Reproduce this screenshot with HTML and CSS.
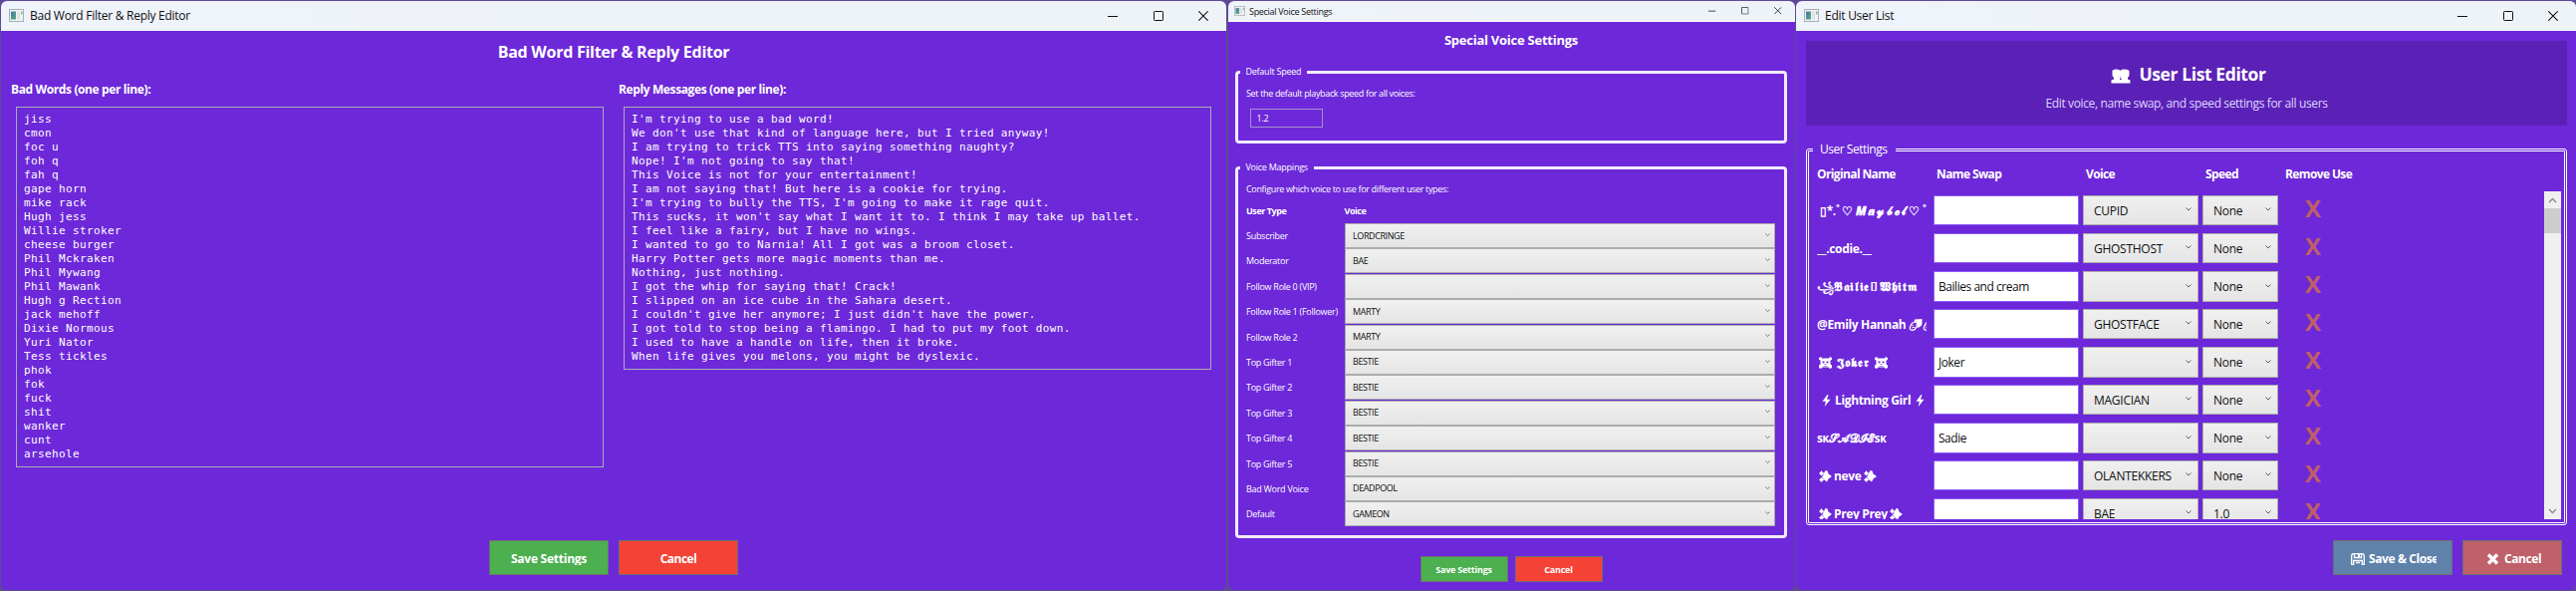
FILE: index.html
```html
<!DOCTYPE html>
<html lang="en">
<head>
<meta charset="utf-8">
<title>TTS Settings Windows</title>
<link rel="stylesheet" href="styles.css">
</head>
<body>
<svg class="defs" width="0" height="0">
  <defs>
    <linearGradient id="appfill" x1="0" y1="0" x2="1" y2="1"><stop offset="0" stop-color="#4c78b0"/><stop offset="1" stop-color="#4fae7c"/></linearGradient>
    <symbol id="app" viewBox="0 0 15 13"><rect x=".5" y=".5" width="14" height="12" fill="#f2f3f3" stroke="#a9aeb2"/><rect x="2" y="2.5" width="5" height="8" fill="url(#appfill)"/><rect x="8" y="2.5" width="3" height="8" fill="#dfe2e4"/><rect x="12" y="2.5" width="1.5" height="3" fill="#7fb89b"/></symbol>
    <symbol id="min" viewBox="0 0 10 10"><path d="M0 5.5H10" stroke="#111"/></symbol>
    <symbol id="max" viewBox="0 0 10 10"><rect x=".5" y=".5" width="9" height="9" rx=".8" fill="none" stroke="#111"/></symbol>
    <symbol id="close" viewBox="0 0 10 10"><path d="M.3 .3L9.7 9.7M9.7 .3L.3 9.7" stroke="#111" stroke-width="1.05"/></symbol>
    <symbol id="down" viewBox="0 0 6 4"><path d="M.5 .5L3 3L5.5 .5" fill="none" stroke="#606060"/></symbol>
    <symbol id="people" viewBox="0 0 20 15"><path fill="#fff" d="M1.500 2Q2 .5 5 .5Q8 .5 9.500 1.700Q11 .5 14 .5Q18 .5 18.500 2.500V6Q18.500 8 17 9V10.500L19.500 11.500V14.500H.5V11.500L3 10.500V9Q1.500 8 1.500 6Z"/><path d="M10 7V9.500L11 11L9 11Z" fill="#5b21b6"/></symbol>
    <symbol id="floppy" viewBox="0 0 14 12"><path fill="none" stroke="#fff" stroke-width="1.300" d="M.7 11.300V2L2 .7H12L13.300 2V11.300H11.300V7.500H2.700V11.300Z"/><path d="M3.500 .7V4.500H10.500V.7M5 9.500H9" fill="none" stroke="#fff" stroke-width="1.300"/><path d="M7 1H9V4H7Z" fill="#fff"/></symbol>
    <symbol id="cross" viewBox="0 0 13 12"><path d="M2 1.500L11 10.500M11 1.500L2 10.500" stroke="#fff" stroke-width="3.400"/></symbol>
    <symbol id="spark" viewBox="0 0 13 12"><path fill="#fff" d="M6.500 0L8.500 .5L9.500 3.500L13 6L9.500 8.500L8 11.500L5.500 9.500L3 7L4.500 4Z"/><path fill="#fff" d="M2.500 0L3.600 1.800L5.500 3L3.600 4.300L2.500 5.500L1.400 4.300L0 3L1.400 1.800ZM2.500 7L3.600 8.300L5.500 9.500L3.600 10.600L2.500 12L1.400 10.600L0 9.500L1.400 8.300Z"/></symbol>
    <symbol id="bolt" viewBox="0 0 9 12"><path fill="#fff" d="M5.500 0L.5 6.800H3.800L2.800 12L8.500 4.800H5L6.500 0Z"/></symbol>
    <symbol id="skull" viewBox="0 0 13 12"><path fill="#fff" d="M0 1L2 0L3 1.500H10L11 0L13 1V3L11.500 3.500V7.500L13 8.500V11L11 12L9.500 10.500H3.500L2 12L0 11V8.500L1.500 7.500V3.500L0 3Z"/><path d="M3.500 4.500H5.500V6.300H3.500ZM7.500 4.500H9.500V6.300H7.500ZM5.700 7.300H7.300V8H5.700ZM4.500 9H8.500V9.600H4.500Z" fill="#6d28d9"/></symbol>
    <symbol id="masks" viewBox="0 0 14 12"><path fill="none" stroke="#fff" stroke-width="1.200" d="M3.500 4L8.500 3L8 8Q6.500 11.500 3.500 11.300Q.8 11 1.300 8.500Z"/><path fill="#fff" d="M6 .5L13.500 0V5Q12 9 8.500 8.800L9 2.500L5.500 3Z"/><path d="M3.500 6.500L5 6.200M3 9Q5 8 6.500 8.500" stroke="#fff"/></symbol>
  </defs>
</svg>

<div class="desktop">
  <section class="window filter">
    <header class="titlebar"><svg class="app"><use href="#app"/></svg><span class="caption">Bad Word Filter &amp; Reply Editor</span><svg class="ctl"><use href="#min"/></svg><svg class="ctl"><use href="#max"/></svg><svg class="ctl"><use href="#close"/></svg></header>
    <h1>Bad Word Filter &amp; Reply Editor</h1>
    <div class="columns">
      <div class="col words">
        <h2>Bad Words (one per line):</h2>
        <pre class="box">jiss
cmon
foc u
foh q
fah q
gape horn
mike rack
Hugh jess
Willie stroker
cheese burger
Phil Mckraken
Phil Mywang
Phil Mawank
Hugh g Rection
jack mehoff
Dixie Normous
Yuri Nator
Tess tickles
phok
fok
fuck
shit
wanker
cunt
arsehole</pre>
      </div>
      <div class="col replies">
        <h2>Reply Messages (one per line):</h2>
        <pre class="box">I'm trying to use a bad word!
We don't use that kind of language here, but I tried anyway!
I am trying to trick TTS into saying something naughty?
Nope! I'm not going to say that!
This Voice is not for your entertainment!
I am not saying that! But here is a cookie for trying.
I'm trying to bully the TTS, I'm going to make it rage quit.
This sucks, it won't say what I want it to. I think I may take up ballet.
I feel like a fairy, but I have no wings.
I wanted to go to Narnia! All I got was a broom closet.
Harry Potter gets more magic moments than me.
Nothing, just nothing.
I got the whip for saying that! Crack!
I slipped on an ice cube in the Sahara desert.
I couldn't give her anymore; I just didn't have the power.
I got told to stop being a flamingo. I had to put my foot down.
I used to have a handle on life, then it broke.
When life gives you melons, you might be dyslexic.</pre>
      </div>
    </div>
    <footer class="actions"><div class="btn green"><span>Save Settings</span></div><div class="btn red"><span>Cancel</span></div></footer>
  </section>

  <section class="window voices">
    <header class="titlebar"><svg class="app"><use href="#app"/></svg><span class="caption">Special Voice Settings</span><svg class="ctl"><use href="#min"/></svg><svg class="ctl"><use href="#max"/></svg><svg class="ctl"><use href="#close"/></svg></header>
    <h1>Special Voice Settings</h1>
    <fieldset class="speed">
      <legend>Default Speed</legend>
      <p>Set the default playback speed for all voices:</p>
      <div class="field">1.2</div>
    </fieldset>
    <fieldset class="mappings">
      <legend>Voice Mappings</legend>
      <p>Configure which voice to use for different user types:</p>
      <div class="maphead"><b>User Type</b><b>Voice</b></div>
      <div class="maprows">
        <div class="map"><label>Subscriber</label><div class="combo">LORDCRINGE<svg><use href="#down"/></svg></div></div>
        <div class="map"><label>Moderator</label><div class="combo">BAE<svg><use href="#down"/></svg></div></div>
        <div class="map"><label>Follow Role 0 (VIP)</label><div class="combo"><svg><use href="#down"/></svg></div></div>
        <div class="map"><label>Follow Role 1 (Follower)</label><div class="combo">MARTY<svg><use href="#down"/></svg></div></div>
        <div class="map"><label>Follow Role 2</label><div class="combo">MARTY<svg><use href="#down"/></svg></div></div>
        <div class="map"><label>Top Gifter 1</label><div class="combo">BESTIE<svg><use href="#down"/></svg></div></div>
        <div class="map"><label>Top Gifter 2</label><div class="combo">BESTIE<svg><use href="#down"/></svg></div></div>
        <div class="map"><label>Top Gifter 3</label><div class="combo">BESTIE<svg><use href="#down"/></svg></div></div>
        <div class="map"><label>Top Gifter 4</label><div class="combo">BESTIE<svg><use href="#down"/></svg></div></div>
        <div class="map"><label>Top Gifter 5</label><div class="combo">BESTIE<svg><use href="#down"/></svg></div></div>
        <div class="map"><label>Bad Word Voice</label><div class="combo">DEADPOOL<svg><use href="#down"/></svg></div></div>
        <div class="map"><label>Default</label><div class="combo">GAMEON<svg><use href="#down"/></svg></div></div>
      </div>
    </fieldset>
    <footer class="actions"><div class="btn green"><span>Save Settings</span></div><div class="btn red"><span>Cancel</span></div></footer>
  </section>

  <section class="window users">
    <header class="titlebar"><svg class="app"><use href="#app"/></svg><span class="caption">Edit User List</span><svg class="ctl"><use href="#min"/></svg><svg class="ctl"><use href="#max"/></svg><svg class="ctl"><use href="#close"/></svg></header>
    <div class="banner">
      <h1><svg><use href="#people"/></svg>User List Editor</h1>
      <p>Edit voice, name swap, and speed settings for all users</p>
    </div>
    <fieldset class="settings">
      <legend>User Settings</legend>
      <div class="grid head"><b>Original Name</b><b>Name Swap</b><b>Voice</b><b>Speed</b><b>Remove Use</b></div>
      <div class="scroll">
        <div class="rows">
          <div class="grid row"><div class="name maybel">▯*.˚ ♡ <i>𝑴𝒂𝔂𝓫𝓮𝓵</i>♡ ˚.</div><div class="input"></div><div class="combo">CUPID<svg><use href="#down"/></svg></div><div class="combo">None<svg><use href="#down"/></svg></div><div class="remove">X</div></div>
          <div class="grid row"><div class="name">__.codie.__</div><div class="input"></div><div class="combo">GHOSTHOST<svg><use href="#down"/></svg></div><div class="combo">None<svg><use href="#down"/></svg></div><div class="remove">X</div></div>
          <div class="grid row"><div class="name bailie"><em>꧁</em>𝕭𝖆𝖎𝖑𝖎𝖊▯𝖂𝖍𝖎𝖙𝖒</div><div class="input">Bailies and cream</div><div class="combo"><svg><use href="#down"/></svg></div><div class="combo">None<svg><use href="#down"/></svg></div><div class="remove">X</div></div>
          <div class="grid row"><div class="name">@Emily Hannah <svg class="g14"><use href="#masks"/></svg> <svg class="g14"><use href="#masks"/></svg></div><div class="input"></div><div class="combo">GHOSTFACE<svg><use href="#down"/></svg></div><div class="combo">None<svg><use href="#down"/></svg></div><div class="remove">X</div></div>
          <div class="grid row"><div class="name joker"><svg class="g13"><use href="#skull"/></svg><i>𝕵𝖔𝖐𝖊𝖗</i><svg class="g13"><use href="#skull"/></svg></div><div class="input">Joker</div><div class="combo"><svg><use href="#down"/></svg></div><div class="combo">None<svg><use href="#down"/></svg></div><div class="remove">X</div></div>
          <div class="grid row"><div class="name bolts"><svg class="g9"><use href="#bolt"/></svg><i>Lightning Girl</i><svg class="g9"><use href="#bolt"/></svg></div><div class="input"></div><div class="combo">MAGICIAN<svg><use href="#down"/></svg></div><div class="combo">None<svg><use href="#down"/></svg></div><div class="remove">X</div></div>
          <div class="grid row"><div class="name sadie">sᴋ<i>𝓢𝓐𝓓𝓘𝓔</i>sᴋ</div><div class="input">Sadie</div><div class="combo"><svg><use href="#down"/></svg></div><div class="combo">None<svg><use href="#down"/></svg></div><div class="remove">X</div></div>
          <div class="grid row"><div class="name sparks"><svg class="g13"><use href="#spark"/></svg><i>neve</i><svg class="g13"><use href="#spark"/></svg></div><div class="input"></div><div class="combo">OLANTEKKERS<svg><use href="#down"/></svg></div><div class="combo">None<svg><use href="#down"/></svg></div><div class="remove">X</div></div>
          <div class="grid row"><div class="name sparks"><svg class="g13"><use href="#spark"/></svg><i>Prey Prey</i><svg class="g13"><use href="#spark"/></svg></div><div class="input"></div><div class="combo">BAE<svg><use href="#down"/></svg></div><div class="combo">1.0<svg><use href="#down"/></svg></div><div class="remove">X</div></div>
        </div>
        <div class="bar">
          <svg viewBox="0 0 17 17"><path d="M5 11L8.500 7.500L12 11" fill="none" stroke="#8a8a8a" stroke-width="1.400"/></svg>
          <div class="thumb"></div>
          <svg class="end" viewBox="0 0 17 17"><path d="M5 7L8.500 10.500L12 7" fill="none" stroke="#8a8a8a" stroke-width="1.400"/></svg>
        </div>
      </div>
    </fieldset>
    <footer class="actions"><div class="btn blue"><svg class="floppy"><use href="#floppy"/></svg><span>Save &amp; Close</span></div><div class="btn rose"><svg class="cross"><use href="#cross"/></svg><span>Cancel</span></div></footer>
  </section>
</div>
</body>
</html>
```
FILE: styles.css
```css
* { box-sizing: border-box; }
body {
  margin: 0;
  background: #5d4a92;
  color: #fff;
  font: 12px/18px "Open Sans", "Noto Sans", sans-serif;
  overflow: hidden;
}
h1, h2, p { margin: 0; white-space: nowrap; }
i, em { font-style: normal; }
.defs { position: absolute; }
svg { display: block; flex: none; }

.desktop {
  display: grid;
  grid-template-columns: 1230px 569px 783px;
  column-gap: 1.5px;
  height: 593px;
  padding: 1px 0 1px 1px;
}
.window {
  display: flex;
  flex-direction: column;
  min-width: 0;
  background: #6d28d9;
  border-radius: 6px;
  overflow: hidden;
}
.titlebar {
  display: flex;
  align-items: center;
  flex: none;
  height: 30px;
  padding: 0 18px 0 8px;
  background: linear-gradient(90deg, #eff3fb, #eef3f8 50%);
  color: #111;
}
.app { width: 15px; height: 13px; margin-top: -2px; }
.caption {
  flex: 1;
  margin-left: 6px;
  letter-spacing: -.26px;
  white-space: nowrap;
}
.ctl { width: 10px; height: 10px; margin: -1px 0 0 35.5px; }

.actions { display: flex; flex: none; margin-top: auto; }
.btn {
  display: flex;
  border: 1px solid #707070;
  font-weight: 700;
}
.btn span { display: block; overflow: hidden; white-space: nowrap; }
.green { background: #4caf50; }
.red { background: #f44336; }
.blue { background: #5f82ab; }
.rose { background: #bf606a; }

.combo {
  display: flex;
  align-items: center;
  border: 1px solid #acacac;
  background: linear-gradient(#f0f0f0, #e5e5e5);
  color: #111;
}
.combo svg { width: 6px; height: 4px; margin: -2px 6px 0 auto; }

/* Bad word filter */
.filter h1 {
  margin-top: 9px;
  font-size: 16px;
  line-height: 24px;
  letter-spacing: -.26px;
  text-align: center;
}
.columns {
  display: grid;
  grid-template-columns: 611px 610px;
  margin: 17px 0 0 9px;
}
.filter h2 { font-size: 12px; line-height: 18px; letter-spacing: -.38px; padding-left: 1px; }
.box {
  margin: 8px 0 0;
  padding: 5px 7px;
  border: 1px solid #abadb3;
  font: 11px/14px "DejaVu Sans Mono", monospace;
  letter-spacing: .375px;
  white-space: pre;
}
.words .box { width: 590px; margin-left: 6px; }
.replies .box { width: 590px; margin-left: 5px; }
.replies h2 { padding-left: 0; }
.filter .actions { justify-content: center; gap: 10px; padding-bottom: 15px; }
.filter .btn { width: 120px; height: 35px; justify-content: center; padding-top: 9px; letter-spacing: -.25px; }
.filter .btn span { height: 15px; }
.filter .btn.red { letter-spacing: -.5px; }

/* Special voice settings */
.voices { font-size: 9px; line-height: 14px; letter-spacing: -.2px; }
.voices .titlebar { height: 21px; padding: 0 13px 0 6px; border-bottom: 1px solid #f8f8ff; }
.voices .app { width: 11px; height: 10px; margin-top: -1px; }
.voices .caption { margin-left: 4.500px; letter-spacing: -.3px; margin-top: 1px; }
.voices .ctl { width: 7.500px; height: 7.500px; margin: 0 0 0 25.500px; }
.voices h1 {
  margin-top: 8px;
  font-size: 13px;
  line-height: 20px;
  letter-spacing: -.25px;
  text-align: center;
}
fieldset { min-width: 0; margin: 0; padding: 0; }
.voices fieldset {
  margin: 0 7.500px 0 7px;
  padding: 8px 7.500px 0 8.500px;
  border: 3px solid #f1ebfc;
  border-radius: 4px;
}
.voices legend { margin-left: -6px; padding: 0 6px 0 5.500px; letter-spacing: -.25px; }
.voices fieldset p { letter-spacing: -.34px; }
.voices fieldset.speed { height: 79px; margin-top: 15px; }
.voices fieldset.mappings { height: 379px; margin-top: 17px; }
.field {
  width: 73px;
  height: 19px;
  margin: 8px 0 0 3.500px;
  padding: 2px 6px;
  border: 1px solid #a58fd0;
}
.maphead, .map { display: grid; grid-template-columns: 98.500px 432.500px; }
.maphead { margin-top: 8px; letter-spacing: -.45px; }
.maprows { display: grid; row-gap: 3.400px; margin-top: 5px; }
.map { height: 22px; }
.map label { line-height: 25px; letter-spacing: -.28px; white-space: nowrap; }
.map .combo { padding-left: 7.500px; letter-spacing: -.4px; }
.map .combo svg { width: 5px; height: 3.500px; margin-right: 4px; }
.voices .actions { justify-content: center; gap: 7px; padding-bottom: 8px; }
.voices .btn { width: 88px; height: 26px; justify-content: center; padding-top: 6px; letter-spacing: -.22px; }
.voices .btn span { height: 12px; }

/* User list */
.banner {
  flex: none;
  height: 85px;
  margin: 10px 9px 0 10px;
  padding-top: 20px;
  background: #5b21b6;
}
.banner h1 {
  display: flex;
  justify-content: center;
  align-items: center;
  gap: 8px;
  padding-left: 4px;
  font-size: 17.500px;
  line-height: 26px;
  letter-spacing: -.4px;
}
.banner svg { width: 20px; height: 15px; margin-top: 5px; }
.banner p { margin-top: 8px; color: #ddd6fe; letter-spacing: -.37px; text-align: center; }
.settings {
  height: 385.500px;
  margin: 15.500px 9px 0 10px;
  border: 3px double #fff;
  border-radius: 3px;
}
.settings legend {
  margin-left: 4px;
  padding: 0 8.500px 2px 7px;
  line-height: 16px;
  letter-spacing: -.48px;
}
.grid {
  display: grid;
  grid-template-columns: 110px 146px 116px 76px 80px;
  column-gap: 4px;
  padding-left: 8px;
}
.head {
  grid-template-columns: 116px 146px 116px 76px 80px;
  padding-top: 6px;
  letter-spacing: -.62px;
  white-space: nowrap;
}
.scroll { display: flex; height: 329px; margin-top: 8px; overflow: hidden; }
.rows { display: grid; grid-auto-rows: 30px; row-gap: 8px; flex: 1; padding-top: 4px; }
.row { grid-template-columns: 113px 146px 116px 76px 50px; }
.row .input {
  padding: 1px 4px 0;
  border: 1px solid #8b5cf6;
  background: #fff;
  color: #111;
  line-height: 28px;
  letter-spacing: -.46px;
  white-space: nowrap;
}
.row .combo { padding: 2px 0 0 10px; letter-spacing: -.27px; }
.row .combo svg { margin-top: -3px; }
.name {
  display: flex;
  align-items: center;
  width: 110px;
  overflow: hidden;
  padding-top: 2px;
  font-weight: 700;
  letter-spacing: -.35px;
  white-space: pre;
}
.g9 { width: 9px; height: 12px; }
.g13 { width: 13px; height: 12px; }
.g14 { width: 14px; height: 12px; }
.maybel { padding-left: 3px; }
.maybel i { letter-spacing: 2.300px; }
.bailie { letter-spacing: .7px; }
.bailie em { font-size: 11px; letter-spacing: 0; }
.joker { padding-left: 2px; gap: 5px; }
.joker i { letter-spacing: .8px; }
.bolts { padding-left: 5px; gap: 4px; }
.bolts svg:last-child { margin-left: 1px; }
.sadie i { letter-spacing: .1px; }
.sparks { padding-left: 2px; gap: 2px; }
.remove {
  padding-left: 23px;
  color: #bf5f68;
  font-size: 24px;
  font-weight: 700;
  line-height: 25px;
}
.bar { display: flex; flex-direction: column; width: 17px; margin-right: 3px; background: #f0f0f0; }
.bar svg { width: 17px; height: 17px; }
.bar .end { margin-top: auto; }
.thumb { height: 25px; background: #cdcdcd; }
.users .actions { justify-content: flex-end; gap: 10px; padding: 0 14px 15px 0; }
.users .btn { height: 35px; padding-top: 9px; letter-spacing: -.4px; }
.blue { width: 120px; padding-left: 17px; }
.blue span { width: 68px; margin-left: 4px; }
.rose { width: 100px; padding-left: 23px; }
.rose span { margin-left: 5px; }
.floppy { width: 14px; height: 12px; margin-top: 3px; }
.cross { width: 13px; height: 12px; margin-top: 3px; }
```
